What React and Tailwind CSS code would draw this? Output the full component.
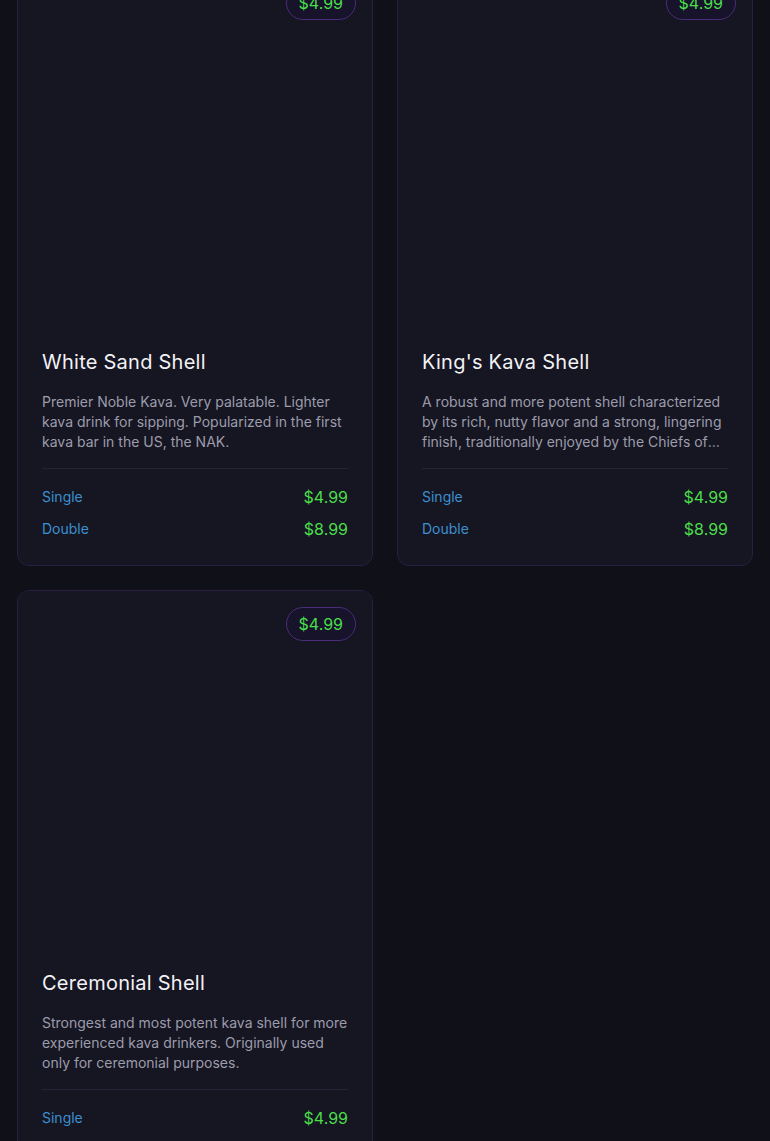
import React from "react";

const items = [
  {
    name: "White Sand Shell",
    desc: "Premier Noble Kava. Very palatable. Lighter kava drink for sipping. Popularized in the first kava bar in the US, the NAK.",
    prices: [["Single", "$4.99"], ["Double", "$8.99"]],
  },
  {
    name: "King's Kava Shell",
    desc: "A robust and more potent shell characterized by its rich, nutty flavor and a strong, lingering finish, traditionally enjoyed by the Chiefs of Vanuatu for special occasions and gatherings.",
    prices: [["Single", "$4.99"], ["Double", "$8.99"]],
  },
  {
    name: "Ceremonial Shell",
    desc: "Strongest and most potent kava shell for more experienced kava drinkers. Originally used only for ceremonial purposes.",
    prices: [["Single", "$4.99"], ["Double", "$8.99"]],
  },
];

function Card({ item }) {
  return (
    <div className="rounded-xl border border-[#2a1f42] bg-[#161522] overflow-hidden">
      <div className="relative aspect-square bg-[#161522]">
        <span className="absolute top-4 right-4 rounded-full border border-[#4a2d78] bg-[#16132a] px-3 py-1 text-base leading-6 text-[#4ade4a]">
          $4.99
        </span>
      </div>
      <div className="p-6">
        <h3 className="text-xl leading-7 tracking-[0.25px] text-[#f2f2f5]">{item.name}</h3>
        <p className="mt-4 text-sm leading-5 text-[#9c9cab] line-clamp-3">{item.desc}</p>
        <div className="mt-4 border-t border-[#272238] pt-4 flex flex-col gap-2">
          {item.prices.map(([label, price]) => (
            <div key={label} className="flex items-center justify-between h-6">
              <span className="text-sm text-[#3a90cf]">{label}</span>
              <span className="text-base text-[#4ade4a]">{price}</span>
            </div>
          ))}
        </div>
      </div>
    </div>
  );
}

export default function App() {
  return (
    <div className="min-h-screen bg-[#101018] overflow-hidden" style={{ fontFamily: "Inter, 'Noto Sans', sans-serif" }}>
      <div className="mt-[-31px] grid grid-cols-2 gap-6 px-[17px] pb-10 items-start">
        {items.map((it) => (
          <Card key={it.name} item={it} />
        ))}
      </div>
    </div>
  );
}
